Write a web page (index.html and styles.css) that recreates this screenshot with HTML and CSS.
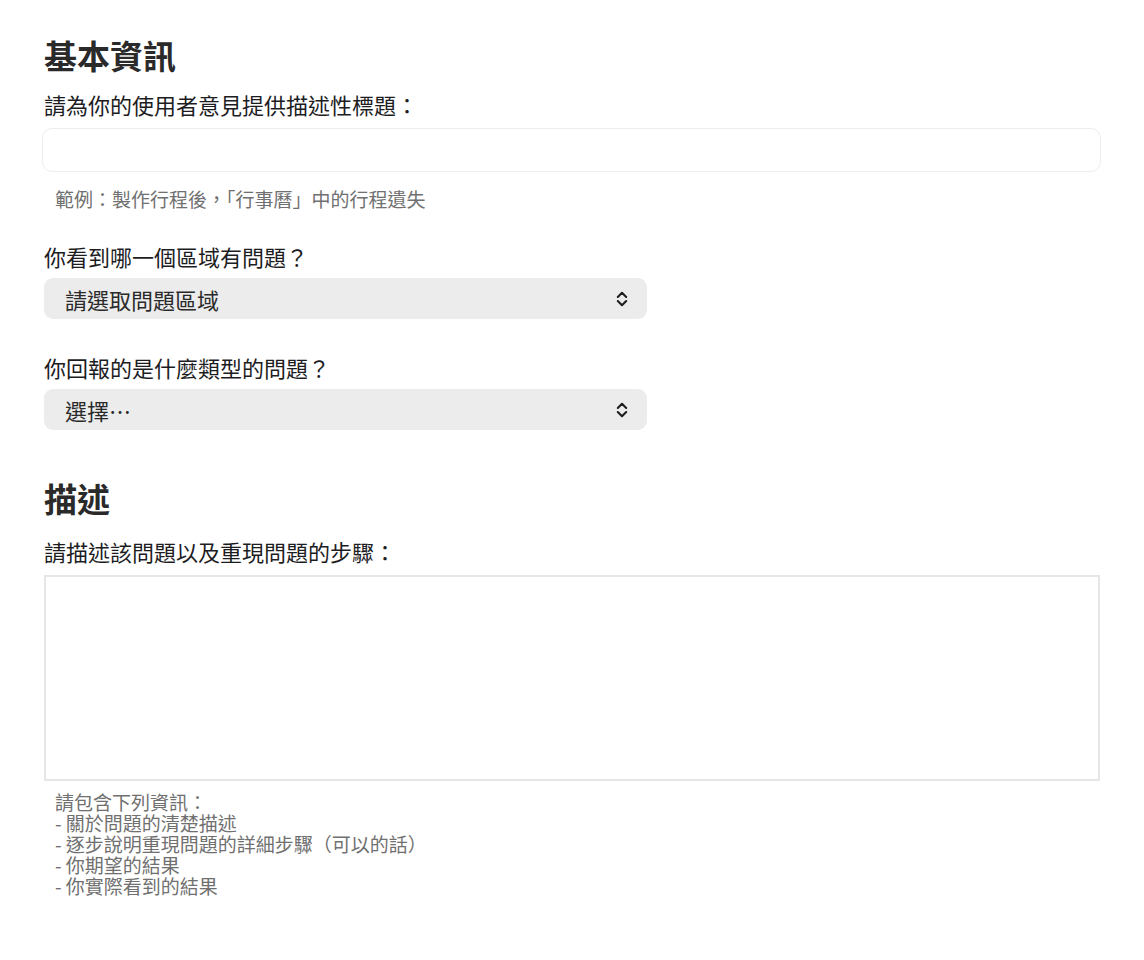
FILE: index.html
```html
<!DOCTYPE html>
<html lang="zh-Hant">
<head>
<meta charset="utf-8">
<title>意見回饋</title>
<link rel="stylesheet" href="styles.css">
</head>
<body>
<main class="page">
  <h1 class="heading heading-first">基本資訊</h1>
  <label class="label label-first" for="title">請為你的使用者意見提供描述性標題：</label>
  <input class="text-input" id="title" type="text">
  <p class="hint">範例：製作行程後，「行事曆」中的行程遺失</p>

  <div class="label label-gap">你看到哪一個區域有問題？</div>
  <div class="select">
    <span class="select-text">請選取問題區域</span>
    <svg class="chevron" width="12" height="18" viewBox="0 0 12 18"><path d="M1.8 7 L6 2.8 L10.2 7 M1.8 11 L6 15.2 L10.2 11" fill="none" stroke="#1f1f1f" stroke-width="2.1" stroke-linecap="round" stroke-linejoin="round"/></svg>
  </div>

  <div class="label label-gap2">你回報的是什麼類型的問題？</div>
  <div class="select">
    <span class="select-text">選擇…</span>
    <svg class="chevron" width="12" height="18" viewBox="0 0 12 18"><path d="M1.8 7 L6 2.8 L10.2 7 M1.8 11 L6 15.2 L10.2 11" fill="none" stroke="#1f1f1f" stroke-width="2.1" stroke-linecap="round" stroke-linejoin="round"/></svg>
  </div>

  <h2 class="heading heading-second">描述</h2>
  <label class="label label-desc" for="desc">請描述該問題以及重現問題的步驟：</label>
  <textarea class="text-area" id="desc"></textarea>
  <div class="helper">
    <div class="helper-line">請包含下列資訊：</div>
    <div class="helper-line">- 關於問題的清楚描述</div>
    <div class="helper-line">- 逐步說明重現問題的詳細步驟（可以的話）</div>
    <div class="helper-line">- 你期望的結果</div>
    <div class="helper-line">- 你實際看到的結果</div>
  </div>
</main>
</body>
</html>
```

FILE: styles.css
```css
html, body {
  margin: 0;
  padding: 0;
  background: #ffffff;
}

body {
  font-family: "Noto Sans CJK TC", "Noto Sans", "Liberation Sans", sans-serif;
  color: #1d1d1f;
}

.page {
  width: 1056px;
  padding: 0 44px 40px 44px;
}

.heading {
  margin: 0;
  font-size: 33px;
  line-height: 36px;
  font-weight: 700;
  color: #2a2a2a;
}

.heading-first {
  padding-top: 37px;
}

.heading-second {
  margin-top: 50px;
}

.label {
  display: block;
  font-size: 22px;
  line-height: 24px;
  color: #1d1d1f;
}

.label-first {
  margin-top: 19px;
}

.label-gap {
  margin-top: 34px;
}

.label-gap2 {
  margin-top: 36px;
}

.label-desc {
  margin-top: 23px;
}

.text-input {
  display: block;
  box-sizing: border-box;
  margin: 12px -1px 0 -2px;
  width: 1059px;
  height: 44px;
  border: 1.5px solid #ededed;
  border-radius: 10px;
  background: #ffffff;
  outline: none;
}

.hint {
  margin: 16px 0 0 0;
  padding-left: 11px;
  font-size: 19px;
  line-height: 22px;
  color: #707070;
}

.select {
  box-sizing: border-box;
  margin-top: 10px;
  width: 603px;
  height: 41px;
  padding: 0 19px 0 21px;
  background: #ececec;
  border-radius: 9px;
  display: flex;
  align-items: center;
  justify-content: space-between;
}

.select-text {
  font-size: 22px;
  line-height: 24px;
  color: #2a2a2a;
}

.chevron {
  display: block;
  flex: none;
}

.text-area {
  display: block;
  box-sizing: border-box;
  margin-top: 12px;
  width: 1056px;
  height: 206px;
  border: 2px solid #e6e6e6;
  border-radius: 0;
  background: #ffffff;
  resize: none;
  outline: none;
}

.helper {
  margin-top: 10px;
  padding-left: 11px;
  font-size: 19px;
  color: #707070;
}

.helper-line {
  height: 21px;
  line-height: 21px;
  white-space: nowrap;
}
```
